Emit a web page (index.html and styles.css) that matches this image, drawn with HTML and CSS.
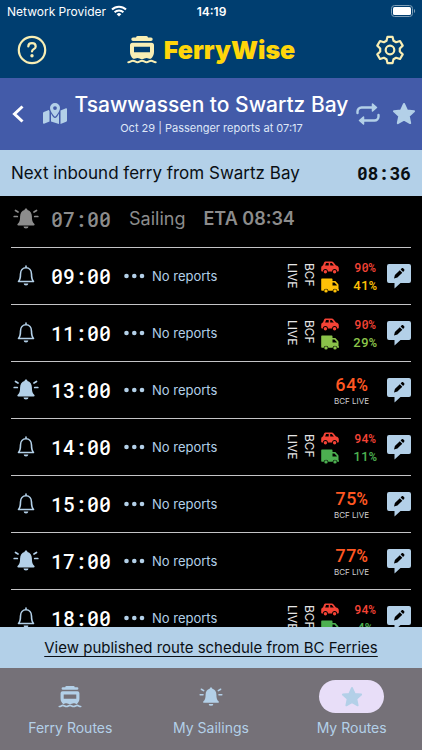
FILE: index.html
```html
<!DOCTYPE html>
<html lang="en">
<head>
<meta charset="UTF-8">
<meta name="viewport" content="width=device-width, initial-scale=1.0">
<title>FerryWise</title>
<link rel="stylesheet" href="styles.css">
</head>
<body>

<svg class="sprite" aria-hidden="true">
  <symbol id="ferry" viewBox="0 0 30 28">
    <path d="M10.500 0h9a1.500 1.500 0 0 1 1.500 1.500h3a1.700 1.700 0 0 1 0 3.400H6a1.700 1.700 0 0 1 0-3.400h3A1.500 1.500 0 0 1 10.500 0z"/>
    <path fill-rule="evenodd" d="M5.500 6.800h19A2.500 2.500 0 0 1 27 9.300V16c0 3-1.200 5-3.200 6.800-1.600.2-2.600-.8-4.200-.8s-2.900 1.200-4.600 1.200-3-1.200-4.600-1.200-2.600 1-4.200.8C4.200 21 3 19 3 16V9.300a2.500 2.500 0 0 1 2.500-2.500zm1.500 4v5.400h16v-5.400z"/>
    <path class="wave" d="M1.300 26.200c2.300 0 2.700-1.500 4.600-1.500s2.600 1.500 4.600 1.500 2.600-1.500 4.500-1.500 2.600 1.500 4.600 1.500 2.600-1.500 4.500-1.500 2.300 1.500 4.600 1.500" fill="none" stroke="currentColor" stroke-width="2" stroke-linecap="round"/>
  </symbol>
  <symbol id="bell" viewBox="0 0 26 24">
    <path d="M13 2v1.500M5.500 17.500c1.600-1.800 2-3.500 2-7.500 0-3.800 2.300-6.300 5.500-6.300s5.500 2.500 5.500 6.300c0 4 .4 5.700 2 7.500z" fill="none" stroke="currentColor" stroke-width="1.600" stroke-linejoin="round" stroke-linecap="round"/>
    <path d="M10.700 19.500h4.600a2.300 2 0 0 1-4.600 0z"/>
  </symbol>
  <symbol id="bell-on" viewBox="0 0 26 24">
    <path d="M13 1.500c.9 0 1.400.6 1.400 1.400 2.800.7 4.500 3.100 4.500 6.600 0 4 .6 5.500 2.300 7.200.8.800.4 1.700-.6 1.700H5.400c-1 0-1.400-.9-.6-1.700 1.700-1.700 2.300-3.200 2.300-7.200 0-3.500 1.700-5.900 4.500-6.600 0-.8.500-1.400 1.400-1.400zM10.500 19.500h5a2.500 2.100 0 0 1-5 0z"/>
    <path d="M5 5 2.500 3.500M4.300 9.500H1.200M21 5l2.500-1.500M21.700 9.500h3.100" stroke="currentColor" stroke-width="1.700" stroke-linecap="round"/>
  </symbol>
  <symbol id="car" viewBox="0 0 18 14">
    <path fill-rule="evenodd" d="M5 1h5.500c1 0 1.700.4 2.300 1.200L15 5c1.800.2 2.800 1.200 2.800 3v2.200c0 .5-.3.800-.8.800h-.9a2.500 2.500 0 0 0-5 0H6.900a2.500 2.500 0 0 0-5 0H1c-.5 0-.8-.3-.8-.8V7.500c0-1.300.7-2.200 1.800-2.500l1-2.700C3.300 1.400 4 1 5 1zm.1 1.500L4.100 5h3.600V2.500zm4.100 0V5h3.700l-1.700-2.100c-.2-.3-.4-.4-.8-.4z"/>
    <circle cx="4.400" cy="11.200" r="1.700"/><circle cx="13.600" cy="11.200" r="1.700"/>
  </symbol>
  <symbol id="truck" viewBox="0 0 18 15">
    <path fill-rule="evenodd" d="M1.200.5h9.300c.6 0 1 .4 1 1V3h2.200c.5 0 .8.100 1.100.5l2.300 2.400c.3.300.4.600.4 1v4.300h.5v1.500h-1.700a2.400 2.400 0 0 0-4.700 0H7.400a2.400 2.400 0 0 0-4.700 0H1.200c-.6 0-1-.4-1-1V1.500c0-.6.400-1 1-1zm10.300 4v3h4.300v-.4l-2.400-2.600z"/>
    <circle cx="5" cy="12.900" r="1.700"/><circle cx="14" cy="12.900" r="1.700"/>
  </symbol>
  <symbol id="report" viewBox="0 0 24 25">
    <path d="M2 0h20a2 2 0 0 1 2 2v15a2 2 0 0 1-2 2h-8.500L7.500 24.500V19H2a2 2 0 0 1-2-2V2a2 2 0 0 1 2-2z"/>
    <path d="m7 14.500.9-3.400 4.900-4.900 2.500 2.500-4.900 4.900zM13.600 5.400l.9-.9c.6-.6 1.300-.6 1.900 0l.6.600c.6.600.6 1.300 0 1.900l-.9.900z" fill="#000"/>
  </symbol>
  <symbol id="star" viewBox="0 0 24 24">
    <path d="m12 2 3 6.500 7 .8-5.200 4.800 1.400 7-6.200-3.500-6.200 3.500 1.400-7L2 9.300l7-.8z" stroke="currentColor" stroke-width="2" stroke-linejoin="round"/>
  </symbol>
  <symbol id="dots" viewBox="0 0 21 6">
    <circle cx="2.500" cy="3" r="2.300"/><circle cx="10.300" cy="3" r="2.300"/><circle cx="18" cy="3" r="2.300"/>
  </symbol>
</svg>

<header class="top">
  <div class="status">
    <span class="carrier">Network Provider
      <svg class="line" width="16" height="12" viewBox="0 0 16 12" stroke="#fff" stroke-width="2"><path d="M1 4.500a10 10 0 0 1 14 0M3.600 7.200a6.300 6.300 0 0 1 8.800 0"/><path d="M8 11.500 5.700 9.200a3.300 3.300 0 0 1 4.600 0z" fill="#fff" stroke="none"/></svg>
    </span>
    <span class="clock">14:19</span>
    <svg class="battery" width="25" height="12" viewBox="0 0 25 12"><rect x=".5" y=".5" width="21" height="11" rx="3" fill="none" stroke="#7f9fb7"/><rect x="2" y="2" width="18" height="8" rx="1.500" fill="#fff"/><path d="M23 4v4c1.500-.7 1.500-3.300 0-4z" fill="#7f9fb7"/></svg>
  </div>
  <div class="app-bar">
    <button class="icon-btn" aria-label="Help">
      <svg class="line" width="30" height="30" viewBox="0 0 30 30" stroke="currentColor" stroke-width="2.200"><circle cx="15" cy="15" r="13.200"/><path d="M11.300 11.500c0-2 1.500-3.300 3.700-3.300s3.700 1.300 3.700 3.200c0 2.800-3.700 2.700-3.700 5.100" stroke-linecap="round"/><circle cx="15" cy="20.800" r="1.700" fill="currentColor" stroke="none"/></svg>
    </button>
    <h1 class="brand"><svg class="brand-icon"><use href="#ferry"/></svg>FerryWise</h1>
    <button class="icon-btn" aria-label="Settings">
      <svg class="line" width="30" height="30" viewBox="0 0 30 30" stroke="currentColor" stroke-width="2.200" stroke-linejoin="round"><path d="M12.500 1.800h5l1 3.900 2.600 1.500 3.900-1.200 2.700 4.600-2.900 2.900v3l2.900 2.900-2.700 4.600-3.900-1.200-2.600 1.500-1 3.900h-5l-1-3.900-2.600-1.500L5 24l-2.700-4.600 2.900-2.900v-3l-2.900-2.900L5 6l3.900 1.200 2.600-1.500z"/><circle cx="15" cy="15" r="4.300"/></svg>
    </button>
  </div>
</header>

<section class="route">
  <button class="back" aria-label="Back">
    <svg class="line" width="12" height="18" viewBox="0 0 12 18" stroke="#fff" stroke-width="3"><path d="m10.500 1.500-8 7.500 8 7.500"/></svg>
  </button>
  <button class="icon-btn" aria-label="Map">
    <svg width="24" height="22" viewBox="0 0 24 22"><path fill-rule="evenodd" d="M12 0a5 5 0 0 1 5 5c0 2.500-2.300 5.800-4.200 8.200-.4.500-1.200.5-1.600 0C9.300 10.800 7 7.500 7 5a5 5 0 0 1 5-5zm0 3.200a1.900 1.900 0 1 0 0 3.800 1.900 1.900 0 0 0 0-3.800z"/><path d="M5.800 7 .8 9c-.5.200-.8.500-.8 1v10c0 .6.500.9 1 .7L6.500 18.500V8.200zM8 10.500v8l8 2.500V10.500c-.8 1.500-1.500 2.600-2.200 3.500-.9 1.200-2.700 1.200-3.600 0-.7-.9-1.500-2-2.200-3.500zM23 5.300 17.500 7.500V21l5.700-2.300c.5-.2.800-.5.800-1V6c0-.6-.5-.9-1-.7z"/></svg>
  </button>
  <div class="route-text">
    <h2>Tsawwassen to Swartz Bay</h2>
    <p>Oct 29 | Passenger reports at 07:17</p>
  </div>
  <button class="icon-btn" aria-label="Swap direction">
    <svg class="line" width="24" height="24" viewBox="0 0 24 24" stroke="currentColor" stroke-width="2.400" stroke-linecap="round"><path d="M1.500 11V9.500a4 4 0 0 1 4-4H17M22.500 13v1.500a4 4 0 0 1-4 4H7"/><path d="m16.500 2 4 3.500-4 3.500zM7.500 15l-4 3.500 4 3.500z" fill="currentColor" stroke-width="1.500" stroke-linejoin="round"/></svg>
  </button>
  <button class="icon-btn" aria-label="Favourite route">
    <svg width="24" height="24"><use href="#star"/></svg>
  </button>
</section>

<section class="inbound">
  <span>Next inbound ferry from Swartz Bay</span>
  <strong>08:36</strong>
</section>

<main class="sailings">
  <ul>
    <li class="sailing departed">
      <button class="alert" aria-label="Alert for 07:00"><svg><use href="#bell-on"/></svg></button>
      <time>07:00</time>
      <span class="state">Sailing</span>
      <span class="eta">ETA 08:34</span>
    </li>
    <li class="sailing">
      <button class="alert" aria-label="Alert for 09:00"><svg><use href="#bell"/></svg></button>
      <time>09:00</time>
      <span class="reports"><svg><use href="#dots"/></svg>No reports</span>
      <span class="live">BCF<br>LIVE</span>
      <div class="decks">
        <div class="deck red"><svg><use href="#car"/></svg><span>90%</span></div>
        <div class="deck large amber"><svg><use href="#truck"/></svg><span>41%</span></div>
      </div>
      <button class="report" aria-label="Report on 09:00"><svg><use href="#report"/></svg></button>
    </li>
    <li class="sailing">
      <button class="alert" aria-label="Alert for 11:00"><svg><use href="#bell"/></svg></button>
      <time>11:00</time>
      <span class="reports"><svg><use href="#dots"/></svg>No reports</span>
      <span class="live">BCF<br>LIVE</span>
      <div class="decks">
        <div class="deck red"><svg><use href="#car"/></svg><span>90%</span></div>
        <div class="deck large lime"><svg><use href="#truck"/></svg><span>29%</span></div>
      </div>
      <button class="report" aria-label="Report on 11:00"><svg><use href="#report"/></svg></button>
    </li>
    <li class="sailing">
      <button class="alert" aria-label="Alert for 13:00"><svg><use href="#bell-on"/></svg></button>
      <time>13:00</time>
      <span class="reports"><svg><use href="#dots"/></svg>No reports</span>
      <div class="total"><b>64%</b><small>BCF LIVE</small></div>
      <button class="report" aria-label="Report on 13:00"><svg><use href="#report"/></svg></button>
    </li>
    <li class="sailing">
      <button class="alert" aria-label="Alert for 14:00"><svg><use href="#bell"/></svg></button>
      <time>14:00</time>
      <span class="reports"><svg><use href="#dots"/></svg>No reports</span>
      <span class="live">BCF<br>LIVE</span>
      <div class="decks">
        <div class="deck red"><svg><use href="#car"/></svg><span>94%</span></div>
        <div class="deck large green"><svg><use href="#truck"/></svg><span>11%</span></div>
      </div>
      <button class="report" aria-label="Report on 14:00"><svg><use href="#report"/></svg></button>
    </li>
    <li class="sailing">
      <button class="alert" aria-label="Alert for 15:00"><svg><use href="#bell"/></svg></button>
      <time>15:00</time>
      <span class="reports"><svg><use href="#dots"/></svg>No reports</span>
      <div class="total"><b>75%</b><small>BCF LIVE</small></div>
      <button class="report" aria-label="Report on 15:00"><svg><use href="#report"/></svg></button>
    </li>
    <li class="sailing">
      <button class="alert" aria-label="Alert for 17:00"><svg><use href="#bell-on"/></svg></button>
      <time>17:00</time>
      <span class="reports"><svg><use href="#dots"/></svg>No reports</span>
      <div class="total"><b>77%</b><small>BCF LIVE</small></div>
      <button class="report" aria-label="Report on 17:00"><svg><use href="#report"/></svg></button>
    </li>
    <li class="sailing">
      <button class="alert" aria-label="Alert for 18:00"><svg><use href="#bell"/></svg></button>
      <time>18:00</time>
      <span class="reports"><svg><use href="#dots"/></svg>No reports</span>
      <span class="live">BCF<br>LIVE</span>
      <div class="decks">
        <div class="deck red"><svg><use href="#car"/></svg><span>94%</span></div>
        <div class="deck large green"><svg><use href="#truck"/></svg><span>4%</span></div>
      </div>
      <button class="report" aria-label="Report on 18:00"><svg><use href="#report"/></svg></button>
    </li>
  </ul>
</main>

<div class="schedule"><a href="#schedule">View published route schedule from BC Ferries</a></div>

<nav class="tabs">
  <a href="#routes"><span class="pill"><svg><use href="#ferry"/></svg></span>Ferry Routes</a>
  <a href="#sailings"><span class="pill"><svg><use href="#bell-on"/></svg></span>My Sailings</a>
  <a href="#my-routes" class="active"><span class="pill"><svg><use href="#star"/></svg></span>My Routes</a>
</nav>

</body>
</html>
```
FILE: styles.css
```css
* {
  box-sizing: border-box;
}

body {
  margin: 0;
  height: 100vh;
  display: flex;
  flex-direction: column;
  overflow: hidden;
  background: #000;
  color: #fff;
  font-family: Inter, "Liberation Sans", sans-serif;
}

h1, h2, p, ul {
  margin: 0;
  padding: 0;
}

button {
  padding: 0;
  border: none;
  background: none;
  color: inherit;
  font: inherit;
  cursor: pointer;
}

svg {
  display: block;
  flex: none;
  fill: currentColor;
}

svg.line {
  fill: none;
}

.sprite {
  position: absolute;
  width: 0;
  height: 0;
}

/* Header */
.top {
  background: #003e70;
}

.status {
  display: grid;
  grid-template-columns: 1fr auto 1fr;
  align-items: center;
  height: 22px;
  padding: 0 6px 0 7px;
  font-size: 12px;
}

.carrier {
  display: flex;
  align-items: center;
  gap: 5px;
}

.clock {
  font-size: 12px;
  font-weight: 600;
}

.battery {
  justify-self: end;
}

.app-bar {
  display: flex;
  align-items: center;
  justify-content: space-between;
  height: 56px;
  padding: 0 17px;
  color: #f8eeb4;
}

.brand {
  display: flex;
  align-items: center;
  gap: 7px;
  color: #ffd60a;
  font-size: 25px;
  font-weight: 900;
}

.brand-icon {
  width: 30px;
  height: 28px;
  color: #f8eeb4;
}

.brand-icon .wave {
  opacity: 0.5;
}

/* Route title */
.route {
  display: flex;
  align-items: center;
  gap: 12px;
  height: 72px;
  padding: 0 6px 0 12px;
  background: #435ba9;
  color: #b3d0e8;
}

.route .back {
  margin-right: 7px;
}

.route-text {
  flex: 1;
  margin: 0 -8px;
  text-align: center;
  white-space: nowrap;
  color: #fff;
}

.route-text h2 {
  font-size: 21px;
  line-height: 26px;
  font-weight: 500;
}

.route-text p {
  margin-top: 2px;
  font-size: 11px;
  line-height: 16px;
  color: #dfe7f7;
}

.inbound {
  display: flex;
  align-items: center;
  justify-content: space-between;
  height: 46px;
  padding: 0 11px;
  background: #b3d0e8;
  color: #0a0f14;
  font-size: 17px;
}

.inbound strong,
.sailing time,
.decks,
.total b {
  font-family: "Roboto Mono", "DejaVu Sans Mono", monospace;
}

.inbound strong {
  font-size: 18px;
}

/* Sailings */
.sailings {
  flex: 1;
  min-height: 0;
  overflow: hidden;
  padding: 0 11px;
}

.sailings ul {
  list-style: none;
}

.sailing {
  display: flex;
  align-items: center;
  height: 57px;
  border-bottom: 1px solid #c4c4c6;
  color: #b3d0e8;
}

.sailing.departed {
  height: 52px;
  padding-bottom: 6px;
  color: #8c8c8c;
}

.alert {
  margin: 0 12px 0 2px;
}

.alert svg {
  width: 26px;
  height: 24px;
}

.sailing time {
  font-size: 20px;
  font-weight: 500;
  color: #fff;
}

.departed time {
  color: inherit;
}

.state {
  margin-left: 18px;
  font-size: 18px;
}

.eta {
  margin-left: 18px;
  font-size: 18px;
  font-weight: 600;
}

.reports {
  display: flex;
  align-items: center;
  gap: 7px;
  margin: 0 auto 0 13px;
  font-size: 13px;
}

.reports svg {
  width: 21px;
  height: 6px;
}

.live {
  writing-mode: vertical-rl;
  margin-right: 3px;
  font-size: 12px;
  line-height: 17px;
  color: #e6e6e6;
}

.decks {
  width: 56px;
  margin-right: 10px;
  font-size: 12px;
  font-weight: 500;
}

.deck {
  display: flex;
  align-items: center;
  justify-content: space-between;
  height: 18px;
}

.deck.large {
  font-size: 13px;
}

.deck span {
  width: 24px;
  text-align: center;
}

.deck svg {
  width: 18px;
  height: 15px;
}

.red { color: #f44336; }
.amber { color: #ffc107; }
.lime { color: #8bc34a; }
.green { color: #4caf50; }

.total {
  display: flex;
  flex-direction: column;
  align-items: center;
  margin-right: 18px;
}

.total b {
  font-size: 18px;
  line-height: 22px;
  font-weight: 500;
  color: #ff5722;
}

.total small {
  font-size: 8px;
  line-height: 12px;
  color: #d0d0d0;
}

.report svg {
  width: 24px;
  height: 25px;
}

/* Footer */
.schedule {
  display: flex;
  align-items: center;
  justify-content: center;
  height: 41px;
  background: #b3d0e8;
  font-size: 15px;
}

.schedule a {
  color: #0a0f14;
  text-underline-offset: 3px;
}

.tabs {
  display: grid;
  grid-template-columns: repeat(3, 1fr);
  height: 82px;
  padding-top: 12px;
  background: #757178;
}

.tabs a {
  display: flex;
  flex-direction: column;
  align-items: center;
  gap: 6px;
  color: #b3d0e8;
  font-size: 14px;
  line-height: 18px;
  text-decoration: none;
}

.pill {
  display: flex;
  align-items: center;
  justify-content: center;
  width: 65px;
  height: 33px;
  border-radius: 17px;
}

.pill svg {
  width: 26px;
  height: 22px;
}

.active .pill {
  background: #e8def8;
}
```
